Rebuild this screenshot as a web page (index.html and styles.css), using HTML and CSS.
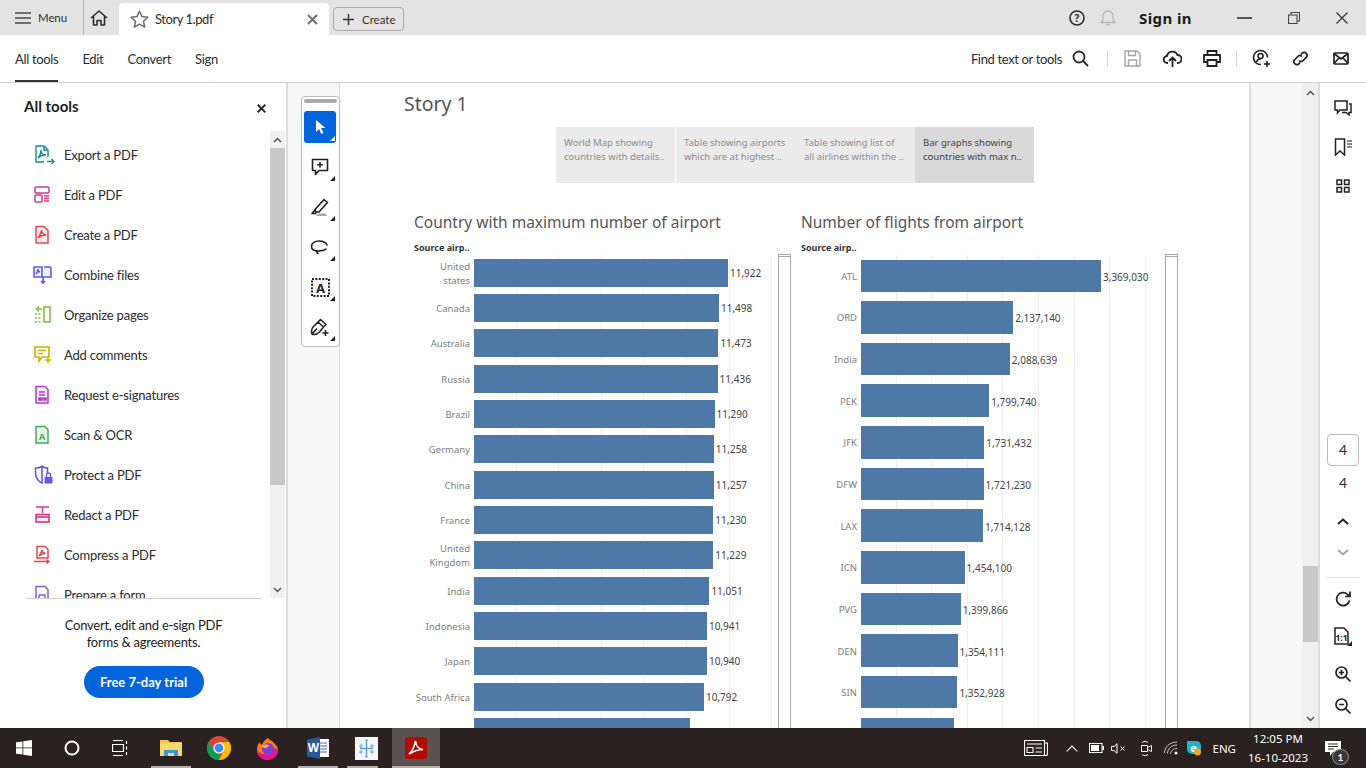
FILE: index.html
```html
<!DOCTYPE html>
<html lang="en">
<head>
    <meta charset="UTF-8">
    <meta name="viewport" content="width=device-width, initial-scale=1.0">
    <title>Story 1.pdf</title>
    <link rel="stylesheet" href="styles.css">
</head>
<body>
    <!-- title bar -->
    <header class="titlebar">
        <div class="menu-btn">
            <svg width="16" height="12" viewBox="0 0 16 12"><path d="M0 1h16M0 6h16M0 11h16" stroke="#4b4b4b" stroke-width="1.6"/></svg>
            <span>Menu</span>
        </div>
        <div class="home-btn">
            <svg width="18" height="18" viewBox="0 0 18 18" fill="none" stroke="#2c2c2c" stroke-width="1.6" stroke-linejoin="round"><path d="M1 9 9 2l8 7M3.5 7.5V16H7v-4.5h4V16h3.5V7.5"/></svg>
        </div>
        <div class="tab">
            <svg width="19" height="18" viewBox="0 0 19 18" fill="none" stroke="#6b6b6b" stroke-width="1.5" stroke-linejoin="round"><path d="M9.5 1.2l2.5 5.4 5.9.7-4.4 4 1.2 5.8-5.2-2.9-5.2 2.9 1.2-5.8-4.4-4 5.9-.7z"/></svg>
            <span class="tab-name">Story 1.pdf</span>
            <svg width="11" height="11" viewBox="0 0 11 11"><path d="M1 1l9 9M10 1l-9 9" stroke="#6e6e6e" stroke-width="2"/></svg>
        </div>
        <div class="create-btn">
            <svg width="11" height="11" viewBox="0 0 11 11"><path d="M5.5 0v11M0 5.5h11" stroke="#333" stroke-width="1.4"/></svg>
            <span>Create</span>
        </div>
        <div class="title-right">
            <svg class="help-icon" width="16" height="16" viewBox="0 0 16 16"><circle cx="8" cy="8" r="7" fill="none" stroke="#2c2c2c" stroke-width="1.6"/><text x="8" y="11.5" text-anchor="middle" class="svg-help">?</text></svg>
            <svg class="bell-icon" width="16" height="17" viewBox="0 0 16 17" fill="none" stroke="#b9b9b9" stroke-width="1.4"><path d="M1 13.5c1.5-1 2-2 2-4.5V7a5 5 0 0 1 10 0v2c0 2.500.5 3.500 2 4.500zM6 15.500h4"/></svg>
            <span class="sign-in">Sign in</span>
            <svg class="win-min" width="15" height="2" viewBox="0 0 15 2"><path d="M0 1h15" stroke="#222" stroke-width="1.5"/></svg>
            <svg class="win-max" width="12" height="12" viewBox="0 0 12 12" fill="none" stroke="#444" stroke-width="1.1"><path d="M.5 3H9v8.500H.5zM3 3V.5h8.500V9H9"/></svg>
            <svg class="win-close" width="12" height="12" viewBox="0 0 12 12"><path d="M.5.5l11 11M11.500.5l-11 11" stroke="#333" stroke-width="1.2"/></svg>
        </div>
    </header>

    <!-- tool bar -->
    <nav class="toolbar">
        <a class="nav-link active">All tools</a>
        <a class="nav-link">Edit</a>
        <a class="nav-link">Convert</a>
        <a class="nav-link">Sign</a>
        <div class="toolbar-right">
            <span class="find-text">Find text or tools</span>
            <svg class="tb-search" width="17" height="17" viewBox="0 0 17 17" fill="none" stroke="#2c2c2c" stroke-width="1.8"><circle cx="7" cy="7" r="5.5"/><path d="M11 11l5 5"/></svg>
            <i class="tb-sep sep-a"></i>
            <svg class="tb-save" width="17" height="17" viewBox="0 0 17 17" fill="none" stroke="#a5a5a5" stroke-width="1.4"><path d="M1 1h12l3 3v12H1zM4.500 1v4.500h7V1M4.500 16v-6h8v6"/></svg>
            <svg class="tb-upload" width="19" height="18" viewBox="0 0 19 18" fill="none" stroke="#222" stroke-width="1.8"><path d="M5 13h-.5a3.500 3.500 0 0 1-.5-7 5.500 5.500 0 0 1 10.500-1 4 4 0 0 1 0 8H14M9.500 17V8M6 11l3.500-3.500L13 11"/></svg>
            <svg class="tb-print" width="18" height="17" viewBox="0 0 18 17" fill="none" stroke="#222" stroke-width="1.8"><path d="M4.500 5V1h9v4M4 12H1V5h16v7h-3M4.500 10h9v6h-9z"/></svg>
            <i class="tb-sep sep-b"></i>
            <svg class="tb-share" width="19" height="19" viewBox="0 0 19 19" fill="none" stroke="#222" stroke-width="1.6"><path d="M9 15.500a7 7 0 1 1 6.500-7"/><circle cx="8.500" cy="7" r="2.500"/><path d="M4.500 13c.5-2 2-3 4-3M15 12v6M12 15h6"/></svg>
            <svg class="tb-link" width="17" height="17" viewBox="0 0 17 17" fill="none" stroke="#222" stroke-width="1.7"><path d="M7 10.500a3 3 0 0 0 4.200 0l3.300-3.300a3 3 0 0 0-4.200-4.200L9 4.300M10 6.500a3 3 0 0 0-4.200 0l-3.300 3.300a3 3 0 0 0 4.200 4.200L8 12.700"/></svg>
            <svg class="tb-mail" width="16" height="13" viewBox="0 0 16 13" fill="none" stroke="#222" stroke-width="1.7"><rect x="1" y="1" width="14" height="11" rx="1"/><path d="M1 1.500 8 7l7-5.500M1 11.500 6 6M15 11.500 10 6"/></svg>
        </div>
    </nav>

    <div class="workspace">
        <!-- all tools panel -->
        <aside class="tools-panel">
            <div class="panel-head">
                <h2>All tools</h2>
                <svg width="9" height="9" viewBox="0 0 9 9"><path d="M.7.7l7.600 7.600M8.300.7.700 8.300" stroke="#222" stroke-width="1.9"/></svg>
            </div>
            <div class="panel-scroll">
                <ul class="tool-list">
                    <li>
                        <svg width="22" height="20" viewBox="0 0 22 20" fill="none" stroke="#1b8a98" stroke-width="1.4"><path d="M11 17H3V1h8l4 4v7M11 1v4h4M5 13c2-2 3-5 3-8 0 3 2 5 5 5-3 0-6 1-8 3zM14 16.500h7M18.500 14l2.500 2.500-2.500 2.500"/></svg>
                        <span>Export a PDF</span>
                    </li>
                    <li>
                        <svg width="22" height="20" viewBox="0 0 22 20" fill="none" stroke="#cf3a97" stroke-width="1.5"><rect x="2" y="2" width="14" height="6" rx="1"/><rect x="2" y="10" width="7" height="7" rx="1"/><path d="M11 11h5M11 13.500h5M11 16h5"/></svg>
                        <span>Edit a PDF</span>
                    </li>
                    <li>
                        <svg width="22" height="20" viewBox="0 0 22 20" fill="none" stroke="#e34850" stroke-width="1.5"><path d="M3 1.500h8l4 4V18H3z" fill="#fdecec"/><path d="M5 13c2-2 3-5 3.500-8 0 3 2 4.500 4.500 5-3 0-6 1-8 3z"/></svg>
                        <span>Create a PDF</span>
                    </li>
                    <li>
                        <svg width="22" height="20" viewBox="0 0 22 20" fill="none" stroke="#5c5ce0" stroke-width="1.6"><path d="M1 2h8v10H1zM11 2h6l1 1v9h-7M9 12h2M10 12v6M8 16l2 2 2-2M3 9c1-1 2-3 2-5 0 2 1 3 2 3" fill="#eeeefd"/></svg>
                        <span>Combine files</span>
                    </li>
                    <li>
                        <svg width="22" height="20" viewBox="0 0 22 20" fill="none" stroke="#7cc34a" stroke-width="1.6"><rect x="11" y="2" width="6" height="15"/><path d="M2 9h7M2 13h7M2 17h7" stroke-dasharray="2 1.5"/><path d="M9 4H4M6 1.500 3.500 4 6 6.500"/></svg>
                        <span>Organize pages</span>
                    </li>
                    <li>
                        <svg width="22" height="20" viewBox="0 0 22 20" fill="none" stroke="#d6b300" stroke-width="1.7"><path d="M2 2h14v10H9l-3 4v-4H2zM5 5.500h8M5 8.500h5M15 12v6M12 15h6"/></svg>
                        <span>Add comments</span>
                    </li>
                    <li>
                        <svg width="22" height="20" viewBox="0 0 22 20" fill="none" stroke="#b03ec0" stroke-width="1.5"><path d="M3 1.500h9l3 3V18H3zM6 7h6M6 10h6" fill="#f8ecfa"/><path d="M6 13h3v2H6zM11 13h2v2h-2z" fill="#b03ec0"/></svg>
                        <span>Request e-signatures</span>
                    </li>
                    <li>
                        <svg width="22" height="20" viewBox="0 0 22 20" fill="none" stroke="#3fae5a" stroke-width="1.5"><path d="M3 1.500h9l3 3V18H3z" fill="#e9f7ec"/><text x="9" y="14.500" text-anchor="middle" class="svg-scan">A</text></svg>
                        <span>Scan &amp; OCR</span>
                    </li>
                    <li>
                        <svg width="22" height="20" viewBox="0 0 22 20" fill="none" stroke="#5c5ce0" stroke-width="1.6"><path d="M9 1.500c2 1.200 4 1.500 5.500 1.500v5M9 18C5 16 2.500 13 2.500 8V3C4.500 3 7 2.700 9 1.500V18z"/><rect x="11.500" y="12" width="8" height="6.500" fill="#5c5ce0" stroke="none"/><path d="M13.500 12v-2a2 2 0 0 1 4 0v2" stroke-width="1.3"/></svg>
                        <span>Protect a PDF</span>
                    </li>
                    <li>
                        <svg width="22" height="20" viewBox="0 0 22 20" fill="none" stroke="#d83790" stroke-width="1.6"><path d="M3 2h13M9.500 2v6"/><rect x="3" y="9.500" width="13" height="7.500" fill="#fdeaf4"/><path d="M3 12h13"/></svg>
                        <span>Redact a PDF</span>
                    </li>
                    <li>
                        <svg width="22" height="20" viewBox="0 0 22 20" fill="none" stroke="#e34850" stroke-width="1.5"><path d="M4 1.500h8l3 3V13H4zM6 11c1.500-1.500 2.500-3.500 3-6 0 2 1.500 3 3.500 3.500-2.500 0-4.500 1-6.500 2.500zM1 16.500h15M13.500 14.500l2.500 2-2.500 2"/></svg>
                        <span>Compress a PDF</span>
                    </li>
                    <li>
                        <svg width="22" height="20" viewBox="0 0 22 20" fill="none" stroke="#9256d9" stroke-width="1.5"><path d="M3 1.500h9l3 3V18H3zM6 10h6v8M6 10v8"/></svg>
                        <span>Prepare a form</span>
                    </li>
                </ul>
                <div class="panel-scrollbar">
                    <svg width="9" height="6" viewBox="0 0 9 6"><path d="M1 5l3.500-3.500L8 5" fill="none" stroke="#555" stroke-width="1.5"/></svg>
                    <div class="panel-thumb"></div>
                    <svg class="arrow-down" width="9" height="6" viewBox="0 0 9 6"><path d="M1 1l3.500 3.500L8 1" fill="none" stroke="#555" stroke-width="1.5"/></svg>
                </div>
            </div>
            <div class="panel-foot">
                <p>Convert, edit and e-sign PDF<br>forms &amp; agreements.</p>
                <button class="trial-btn">Free 7-day trial</button>
            </div>
        </aside>

        <!-- quick tools -->
        <div class="quick-column">
            <div class="quick-tools">
                <div class="quick-grip"></div>
                <div class="quick-btn selected">
                    <svg width="13" height="16" viewBox="0 0 13 16"><path d="M2 1v12l3-3 2.500 5 2-1L7 9h4.500z" fill="#fff"/></svg>
                </div>
                <div class="quick-btn">
                    <svg width="18" height="18" viewBox="0 0 18 18" fill="none" stroke="#222" stroke-width="1.6" stroke-linejoin="round"><path d="M1.500 1.500h15v11H8l-3.500 4v-4h-3zM9 4v5.500M6.200 6.700h5.600"/></svg>
                </div>
                <div class="quick-btn">
                    <svg width="20" height="19" viewBox="0 0 20 19" fill="none" stroke="#222" stroke-width="1.6" stroke-linejoin="round"><path d="M5.500 11 14 1.500l3.500 3L9 14H5.500zM5.500 11 2 15.500h4.500"/><path d="M8 15.500h7.500l1.500 2.500H6z" fill="#aaa" stroke="none"/></svg>
                </div>
                <div class="quick-btn">
                    <svg width="20" height="14" viewBox="0 0 20 14" fill="none" stroke="#222" stroke-width="1.6" stroke-linecap="round"><path d="M17 5C16 2.500 13 1 9 1 5 1 1.500 3 1.500 6.500S5 11 8.500 11c3 0 6-.7 7.500-2"/><path d="M7 11c-.5 1 0 2 1 2.500"/></svg>
                </div>
                <div class="quick-btn">
                    <svg width="19" height="19" viewBox="0 0 19 19"><rect x="1" y="1" width="17" height="17" fill="none" stroke="#222" stroke-width="2" stroke-dasharray="2 1.4"/><text x="9.500" y="14.500" text-anchor="middle" class="svg-select">A</text></svg>
                </div>
                <div class="quick-btn">
                    <svg width="20" height="19" viewBox="0 0 20 19" fill="none" stroke="#222" stroke-width="1.6" stroke-linejoin="round"><path d="M2 16c-1-3-.5-5.500 1.500-7.500L8 4l5.500 5-4 5c-2 2-5 3-7.500 2zM8 4l2.500-2.500 5.500 5-2.500 2.500M2 16l5-5.500"/><path d="M15.500 12v6M12.500 15h6"/></svg>
                </div>
            </div>
        </div>

        <!-- document page -->
        <main class="doc">
            <h1 class="story-title">Story 1</h1>
            <div class="story-nav">
                <div class="story-point">World Map showing<br>countries with details..</div>
                <div class="story-point no-sep">Table showing airports<br>which are at highest ..</div>
                <div class="story-point">Table showing list of<br>all airlines within the ..</div>
                <div class="story-point current">Bar graphs showing<br>countries with max n..</div>
            </div>
            <div class="charts">
                <section class="chart">
                    <h2 class="chart-title">Country with maximum number of airport</h2>
                    <div class="axis-name">Source airp..</div>
                    <div class="chart-body">
                        <div class="rows rows-country">
                            <div class="row"><span class="row-label">United<br>states</span><div class="bar" style="width:254px"></div><span class="val">11,922</span></div>
                            <div class="row"><span class="row-label">Canada</span><div class="bar" style="width:245px"></div><span class="val">11,498</span></div>
                            <div class="row"><span class="row-label">Australia</span><div class="bar" style="width:244.4px"></div><span class="val">11,473</span></div>
                            <div class="row"><span class="row-label">Russia</span><div class="bar" style="width:243.6px"></div><span class="val">11,436</span></div>
                            <div class="row"><span class="row-label">Brazil</span><div class="bar" style="width:240.5px"></div><span class="val">11,290</span></div>
                            <div class="row"><span class="row-label">Germany</span><div class="bar" style="width:239.8px"></div><span class="val">11,258</span></div>
                            <div class="row"><span class="row-label">China</span><div class="bar" style="width:239.8px"></div><span class="val">11,257</span></div>
                            <div class="row"><span class="row-label">France</span><div class="bar" style="width:239.3px"></div><span class="val">11,230</span></div>
                            <div class="row"><span class="row-label">United<br>Kingdom</span><div class="bar" style="width:239.2px"></div><span class="val">11,229</span></div>
                            <div class="row"><span class="row-label">India</span><div class="bar" style="width:235.4px"></div><span class="val">11,051</span></div>
                            <div class="row"><span class="row-label">Indonesia</span><div class="bar" style="width:233px"></div><span class="val">10,941</span></div>
                            <div class="row"><span class="row-label">Japan</span><div class="bar" style="width:233px"></div><span class="val">10,940</span></div>
                            <div class="row"><span class="row-label">South Africa</span><div class="bar" style="width:230px"></div><span class="val">10,792</span></div>
                            <div class="row"><span class="row-label"></span><div class="bar" style="width:216px"></div></div>
                        </div>
                        <div class="chart-scroll"></div>
                    </div>
                </section>
                <section class="chart">
                    <h2 class="chart-title">Number of flights from airport</h2>
                    <div class="axis-name">Source airp..</div>
                    <div class="chart-body">
                        <div class="rows rows-flights">
                            <div class="row"><span class="row-label">ATL</span><div class="bar" style="width:240px"></div><span class="val">3,369,030</span></div>
                            <div class="row"><span class="row-label">ORD</span><div class="bar" style="width:152.2px"></div><span class="val">2,137,140</span></div>
                            <div class="row"><span class="row-label">India</span><div class="bar" style="width:148.8px"></div><span class="val">2,088,639</span></div>
                            <div class="row"><span class="row-label">PEK</span><div class="bar" style="width:128.2px"></div><span class="val">1,799,740</span></div>
                            <div class="row"><span class="row-label">JFK</span><div class="bar" style="width:123.3px"></div><span class="val">1,731,432</span></div>
                            <div class="row"><span class="row-label">DFW</span><div class="bar" style="width:122.6px"></div><span class="val">1,721,230</span></div>
                            <div class="row"><span class="row-label">LAX</span><div class="bar" style="width:122.1px"></div><span class="val">1,714,128</span></div>
                            <div class="row"><span class="row-label">ICN</span><div class="bar" style="width:103.6px"></div><span class="val">1,454,100</span></div>
                            <div class="row"><span class="row-label">PVG</span><div class="bar" style="width:99.7px"></div><span class="val">1,399,866</span></div>
                            <div class="row"><span class="row-label">DEN</span><div class="bar" style="width:96.5px"></div><span class="val">1,354,111</span></div>
                            <div class="row"><span class="row-label">SIN</span><div class="bar" style="width:96.4px"></div><span class="val">1,352,928</span></div>
                            <div class="row"><span class="row-label"></span><div class="bar" style="width:93px"></div></div>
                        </div>
                        <div class="chart-scroll"></div>
                    </div>
                </section>
            </div>
        </main>

        <div class="doc-margin"></div>

        <div class="doc-scrollbar">
            <svg width="9" height="6" viewBox="0 0 9 6"><path d="M1 5l3.500-3.500L8 5" fill="none" stroke="#555" stroke-width="1.5"/></svg>
            <div class="doc-thumb"></div>
            <svg width="9" height="6" viewBox="0 0 9 6"><path d="M1 1l3.500 3.500L8 1" fill="none" stroke="#555" stroke-width="1.5"/></svg>
        </div>

        <!-- right rail -->
        <aside class="rail">
            <svg class="rail-comment" width="18" height="17" viewBox="0 0 18 17" fill="none" stroke="#222" stroke-width="1.5"><path d="M1 1h12v9H6l-2.500 3v-3H1zM15 4h2v8.500h-2V15l-3-2.500H8"/></svg>
            <svg class="rail-bookmark" width="18" height="18" viewBox="0 0 18 18" fill="none" stroke="#222" stroke-width="1.5"><path d="M1.500 1h9v16L6 13l-4.500 4z"/><path d="M13 3h5M13 6h5M13 9h5" stroke="#666"/></svg>
            <svg class="rail-grid" width="14" height="14" viewBox="0 0 14 14" fill="none" stroke="#222" stroke-width="1.5"><rect x="1" y="1" width="4.500" height="4.500"/><rect x="8.500" y="1" width="4.500" height="4.500"/><rect x="1" y="8.500" width="4.500" height="4.500"/><rect x="8.500" y="8.500" width="4.500" height="4.500"/></svg>
            <div class="page-box">4</div>
            <div class="page-total">4</div>
            <svg class="rail-up" width="12" height="7" viewBox="0 0 12 7"><path d="M1 6l5-4.500L11 6" fill="none" stroke="#222" stroke-width="2"/></svg>
            <svg class="rail-down" width="12" height="7" viewBox="0 0 12 7"><path d="M1 1l5 4.500L11 1" fill="none" stroke="#a5a5a5" stroke-width="2"/></svg>
            <div class="rail-line"></div>
            <svg class="rail-rotate" width="16" height="16" viewBox="0 0 16 16" fill="none" stroke="#222" stroke-width="1.7"><path d="M14.500 9.500a6.500 6.500 0 1 1-2-6.200l2 1.700M15 .5v5h-5"/></svg>
            <svg class="rail-fit" width="18" height="19" viewBox="0 0 18 19"><path d="M1 1h9l4 4v12H1z" fill="none" stroke="#222" stroke-width="1.5"/><text x="7.500" y="14" text-anchor="middle" class="svg-fit">1:1</text><path d="M18 14v5h-5z" fill="#222"/></svg>
            <svg class="rail-zoom-in" width="16" height="16" viewBox="0 0 16 16" fill="none" stroke="#222" stroke-width="1.7"><circle cx="6.500" cy="6.500" r="5.500"/><path d="M10.500 10.500l5 5M6.500 3.800v5.400M3.800 6.500h5.400"/></svg>
            <svg class="rail-zoom-out" width="16" height="16" viewBox="0 0 16 16" fill="none" stroke="#222" stroke-width="1.7"><circle cx="6.500" cy="6.500" r="5.500"/><path d="M10.500 10.500l5 5M3.800 6.500h5.400"/></svg>
        </aside>
    </div>

    <!-- windows taskbar -->
    <footer class="taskbar">
        <div class="task">
            <svg width="16" height="16" viewBox="0 0 16 16" fill="#fff"><path d="M0 2.300 6.500 1.400v6.100H0zM7.300 1.300 16 0v7.500H7.300zM0 8.300h6.500v6.300L0 13.700zM7.300 8.300H16V16l-8.700-1.300z"/></svg>
        </div>
        <div class="task">
            <svg width="16" height="16" viewBox="0 0 16 16"><circle cx="8" cy="8" r="6.5" fill="none" stroke="#fff" stroke-width="2"/></svg>
        </div>
        <div class="task">
            <svg width="17" height="16" viewBox="0 0 17 16" fill="none" stroke="#fff" stroke-width="1.2"><path d="M1 .5h10M1 15.500h10M.5 4.500h11v7H.5zM14.500 1v3M14.500 6.500v3M14.500 12v3"/></svg>
        </div>
        <div class="task task-gap-a open">
            <svg width="22" height="18" viewBox="0 0 22 18"><path d="M0 1h8l2 2h12v14H0z" fill="#f2c14e"/><path d="M0 4h22v13H0z" fill="#fbd96f"/><path d="M4 17v-6h14v6h-4v-3H8v3z" fill="#3a9ad9"/></svg>
        </div>
        <div class="task">
            <svg width="24" height="24" viewBox="0 0 24 24"><circle cx="12" cy="12" r="12" fill="#db4437"/><path d="M12 12 1.600 18A12 12 0 0 0 12 24z" fill="#0f9d58"/><path d="M12 12 22.400 18A12 12 0 0 1 12 24L18 12z" fill="#fbbc05"/><path d="M22.400 18a12 12 0 0 0 0-12H12l6 12z" fill="#fbbc05"/><path d="M1.600 18a12 12 0 0 1 0-12L7 14l5 10z" fill="#0f9d58"/><circle cx="12" cy="12" r="5.6" fill="#fff"/><circle cx="12" cy="12" r="4.4" fill="#4285f4"/></svg>
        </div>
        <div class="task">
            <svg width="23" height="23" viewBox="0 0 23 23"><path d="M12 1c1 2 4 2.500 6 5 2 2 4 4 4 7a10.500 10 0 0 1-21 0C1 9 2 7 4 5c0 2 1 2.500 2 3 1-3 3-5.500 6-7z" fill="#ff7a18"/><path d="M22 13a10.500 10 0 0 1-21 0c3 5 12 7 18-2z" fill="#e31587"/><circle cx="12" cy="12" r="6" fill="#7f3bd6"/><path d="M5 9c3-2 7-2 9 0-2 0-3 1-3 2-2 0-4 0-6-2z" fill="#ffa436"/></svg>
        </div>
        <div class="task task-gap-a open">
            <svg width="22" height="22" viewBox="0 0 22 22"><path d="M7 2h15v18H7z" fill="#fff"/><path d="M13 6h7M13 9h7M13 12h7M13 15h7" stroke="#3f6fb5" stroke-width="1.2"/><path d="M0 2.500 13 0v22L0 19.500z" fill="#2b5797"/><text x="6.500" y="15" text-anchor="middle" class="svg-word">W</text></svg>
        </div>
        <div class="task open-split">
            <svg width="23" height="23" viewBox="0 0 23 23"><rect width="23" height="23" fill="#f3f5f6"/><path d="M11.500 5v13M5 11.500h13" stroke="#5b9bd1" stroke-width="1.5"/><path d="M6 7v4M4 9h4M17 7v4M15 9h4M6 13v4M4 15h4M17 13v4M15 15h4M11.500 2v3M10 3.500h3M11.500 18v3M10 19.500h3" stroke="#6fa8d6"/></svg>
        </div>
        <div class="task task-active">
            <svg width="22" height="22" viewBox="0 0 22 22"><rect width="22" height="22" rx="3" fill="#b30b00"/><path d="M4 17c3-2.500 5-6.500 6-11 0-2 1-2 1 0 0 3 3 6 7 6.500-4 0-9 1.500-14 4.500z" fill="none" stroke="#fff" stroke-width="1.5"/></svg>
        </div>
        <div class="tray">
            <svg class="tray-news" width="24" height="16" viewBox="0 0 24 16" fill="none" stroke="#fff" stroke-width="1.1"><path d="M.5.500h20v15H.5zM20.500 3h3v11a1.500 1.500 0 0 1-3 0M3 4h15M3 7.500h6v5H3zM11.500 8H18M11.500 12H18"/></svg>
            <svg class="tray-chev" width="12" height="7" viewBox="0 0 12 7"><path d="M.7 6.300 6 1l5.300 5.300" fill="none" stroke="#fff" stroke-width="1.1"/></svg>
            <svg class="tray-battery" width="15" height="10" viewBox="0 0 15 10"><rect x=".5" y=".5" width="12.500" height="9" fill="none" stroke="#fff"/><rect x="2" y="2" width="8" height="6" fill="#fff"/><rect x="13.500" y="3" width="1.500" height="4" fill="#fff"/></svg>
            <svg class="tray-volume" width="15" height="11" viewBox="0 0 15 11" fill="none" stroke="#fff"><path d="M.5 3.500H3L6 .7v9.600L3 7.500H.5zM9.500 3.500l4 4M13.500 3.500l-4 4"/></svg>
            <svg class="tray-meet" width="13" height="17" viewBox="0 0 13 17" fill="none" stroke="#fff"><path d="M2.500 5.500h6v6h-6zM8.500 7.500l4-2v6l-4-2M3 2.500c2-1.500 4-1.500 6 0M3 14.500c2 1.500 4 1.500 6 0"/></svg>
            <svg class="tray-wifi" width="14" height="14" viewBox="0 0 14 14" fill="none" stroke="#c9c9c9"><path d="M.5 12C.5 6 6 1 13 1M3.500 12.500C3.500 8 7.500 4 13 4M6.500 13c0-3 3-5.500 6.500-5.500"/><circle cx="12" cy="12" r="1.5" fill="#fff" stroke="none"/></svg>
            <svg class="tray-eset" width="16" height="16" viewBox="0 0 16 16"><path d="M1 1h9a5 5 0 0 1 5 5v3a5 5 0 0 1-5 5H6a5 5 0 0 1-5-5z" fill="#1fb5c4"/><text x="7.500" y="11.500" text-anchor="middle" class="svg-eset">e</text><circle cx="11.500" cy="12" r="3.500" fill="#f5a623"/></svg>
            <span class="tray-lang">ENG</span>
            <div class="clock"><span>12:05 PM</span><span>16-10-2023</span></div>
            <div class="notify">
                <svg width="16" height="15" viewBox="0 0 16 15"><path d="M0 0h16v11H8l-3 4v-4H0z" fill="#fff"/><path d="M3 3h10M3 5.500h10M3 8h6" stroke="#2a2220"/></svg>
                <span class="notify-badge">1</span>
            </div>
        </div>
    </footer>
</body>
</html>
```

FILE: styles.css
```css
* {
    box-sizing: border-box;
}
html, body {
    margin: 0;
    height: 768px;
    overflow: hidden;
}
body {
    font-family: "Lato", "Noto Sans", sans-serif;
    font-size: 13px;
    color: #2c2c2c;
    background: #fff;
    display: flex;
    flex-direction: column;
}
svg {
    display: block;
    flex: none;
}

/* title bar */
.titlebar {
    height: 35px;
    background: #e3e3e3;
    display: flex;
    align-items: flex-end;
    flex: none;
}
.titlebar > div {
    height: 35px;
    display: flex;
    align-items: center;
}
.menu-btn {
    width: 84px;
    padding-left: 15px;
    gap: 7px;
    font-size: 11.5px;
    letter-spacing: -.1px;
    color: #333;
    border-right: 1px solid #b5b5b5;
    background-clip: padding-box;
}
.home-btn {
    width: 35px;
    padding-left: 6px;
}
.titlebar > .tab {
    width: 210px;
    height: 32px;
    background: #fff;
    border-radius: 4px 4px 0 0;
    padding: 0 11px;
    gap: 15px;
    color: #2c2c2c;
    font-size: 13px;
    letter-spacing: -.45px;
}
.tab-name {
    flex: 1;
    margin-left: -9px;
}
.titlebar > .create-btn {
    width: 71px;
    height: 24px;
    margin: 0 0 4px 4px;
    border: 1px solid #aaa;
    border-radius: 4px;
    padding-left: 9px;
    gap: 8px;
    font-size: 11.5px;
    color: #333;
}
.titlebar > .title-right {
    margin-left: auto;
    padding-right: 18px;
}
.help-icon {
    margin-right: 15px;
}
.bell-icon {
    margin-right: 23px;
}
.sign-in {
    font-family: "Noto Sans", sans-serif;
    font-size: 15px;
    font-weight: 700;
    letter-spacing: .4px;
    color: #1c1c1c;
    margin-right: 38px;
    width: 60px;
}
.win-min {
    margin-right: 36px;
}
.win-max {
    margin-right: 36px;
}

/* tool bar */
.toolbar {
    height: 48px;
    flex: none;
    display: flex;
    padding-left: 15px;
    gap: 24px;
    border-bottom: 1px solid #d0d0d0;
}
.nav-link {
    height: 47px;
    line-height: 48px;
    font-size: 13px;
    letter-spacing: -.32px;
    color: #2c2c2c;
}
.nav-link.active {
    border-bottom: 2px solid #333;
}
.toolbar-right {
    margin-left: auto;
    display: flex;
    align-items: center;
    padding-right: 17px;
}
.find-text {
    font-size: 13px;
    letter-spacing: -.35px;
    margin-right: 10px;
}
.tb-search { margin-right: 18px; }
.tb-sep {
    width: 1px;
    height: 16px;
    background: #d5d5d5;
}
.sep-a { margin-right: 16px; }
.tb-save { margin-right: 22px; }
.tb-upload { margin-right: 21px; }
.tb-print { margin-right: 15px; }
.sep-b { margin-right: 15px; }
.tb-share { margin-right: 21px; }
.tb-link { margin-right: 24px; }

/* main area */
.workspace {
    flex: 1;
    min-height: 0;
    display: flex;
}

/* all tools panel */
.tools-panel {
    width: 288px;
    flex: none;
    border-right: 2px solid #dcdcdc;
    display: flex;
    flex-direction: column;
}
.panel-head {
    height: 48px;
    padding: 14px 20px 0 24px;
    display: flex;
    justify-content: space-between;
    flex: none;
}
.panel-head h2 {
    margin: 0;
    font-size: 15px;
    line-height: 18px;
    font-weight: 700;
    color: #1c1c1c;
}
.panel-head svg {
    margin-top: 7px;
}
.panel-scroll {
    height: 467px;
    flex: none;
    display: flex;
    overflow: hidden;
}
.tool-list {
    list-style: none;
    margin: 0;
    padding: 4px 0 0 33px;
    width: 270px;
    overflow: hidden;
}
.tool-list li {
    height: 40px;
    display: flex;
    align-items: center;
    gap: 9px;
    font-size: 13px;
    letter-spacing: -.2px;
    color: #2c2c2c;
}
.panel-scrollbar {
    width: 15px;
    background: #f0f0f0;
    display: flex;
    flex-direction: column;
    align-items: center;
    padding-top: 6px;
}
.panel-thumb {
    width: 15px;
    height: 337px;
    margin-top: 5px;
    background: #c8c8c8;
}
.arrow-down {
    margin-top: auto;
    margin-bottom: 5px;
}
.panel-foot {
    margin: 0 25px 0 26px;
    border-top: 1px solid #d0d0d0;
    text-align: center;
    flex: 1;
}
.panel-foot p {
    margin: 18px 0 0;
    font-size: 13px;
    line-height: 17px;
    letter-spacing: -.25px;
    color: #1c1c1c;
}
.trial-btn {
    display: block;
    margin: 15px auto 0;
    width: 120px;
    height: 32px;
    border: 0;
    border-radius: 16px;
    background: #0265dc;
    color: #fff;
    font-family: inherit;
    font-size: 13px;
    font-weight: 700;
}

/* quick tools */
.quick-column {
    width: 52px;
    flex: none;
    background: #f7f7f7;
    border-right: 1px solid #dcdcdc;
    padding: 13px 0 0 13px;
}
.quick-tools {
    width: 39px;
    height: 251px;
    background: #fff;
    border: 1px solid #bbb;
    border-radius: 4px;
    padding: 2px;
}
.quick-grip {
    height: 4px;
    background: #aaa;
    border-radius: 2px;
    margin-bottom: 8px;
}
.quick-btn {
    width: 32px;
    height: 32px;
    margin-bottom: 8px;
    border-radius: 3px;
    display: flex;
    align-items: center;
    justify-content: center;
    position: relative;
}
.quick-btn::after {
    content: "";
    position: absolute;
    right: 1px;
    bottom: 2px;
    border-left: 5px solid transparent;
    border-bottom: 5px solid #222;
}
.quick-btn.selected {
    background: #0265dc;
}
.quick-btn.selected::after {
    border-bottom-color: #fff;
}

/* document */
.doc {
    width: 909px;
    flex: none;
    background: #fff;
    overflow: hidden;
    padding: 9px 0 0 64px;
}
.story-title {
    margin: 0;
    font-family: "Noto Sans", sans-serif;
    font-size: 19.5px;
    font-weight: 400;
    line-height: 24px;
    color: #555;
}
.story-nav {
    display: flex;
    width: 478px;
    height: 56px;
    margin: 11px 0 0 152px;
}
.story-point {
    width: 120px;
    padding: 9px 0 0 8px;
    background: #ebebeb;
    font-family: "Noto Sans", sans-serif;
    font-size: 9.5px;
    line-height: 14px;
    color: #8c8c8c;
    border-right: 1px solid #fff;
    white-space: nowrap;
    overflow: hidden;
}
.story-point.no-sep {
    border-right: 0;
}
.story-point.current {
    background: #d9d9d9;
    color: #444;
    border-right: 0;
    width: 119px;
    margin-left: -1px;
}
.charts {
    display: flex;
    gap: 10px;
    margin: 27px 0 0 10px;
}
.chart {
    width: 377px;
}
.chart-title {
    margin: 0;
    font-family: "Noto Sans", sans-serif;
    font-size: 15.5px;
    font-weight: 400;
    line-height: 24px;
    color: #555;
    white-space: nowrap;
}
.axis-name {
    margin-top: 7px;
    height: 14px;
    font-family: "Noto Sans", sans-serif;
    font-size: 9px;
    line-height: 14px;
    font-weight: 700;
    color: #333;
}
.chart-body {
    display: flex;
    height: 600px;
}
.rows {
    width: 364px;
    background-position: 60px 0;
}
.rows-country {
    background-image: repeating-linear-gradient(to right, transparent 0 41.6px, #efefef 41.6px 42.6px);
}
.rows-flights {
    background-image: repeating-linear-gradient(to right, transparent 0 34.6px, #efefef 34.6px 35.6px);
}
.row {
    display: flex;
    align-items: center;
    font-family: "Noto Sans", sans-serif;
}
.rows-country .row {
    height: 35.33px;
}
.rows-country .bar {
    height: 28px;
}
.rows-flights .row {
    height: 41.65px;
}
.rows-flights .bar {
    height: 32.5px;
}
.rows-flights .val {
    margin-top: 2px;
}
.row-label {
    width: 60px;
    height: 100%;
    flex: none;
    padding: 2px 4px 0 0;
    background: #fff;
    display: flex;
    align-items: center;
    justify-content: flex-end;
    text-align: right;
    font-size: 9.5px;
    line-height: 14px;
    color: #808080;
}
.bar {
    background: #4e79a7;
    flex: none;
}
.val {
    margin-left: 2px;
    font-size: 10px;
    color: #444;
}
.chart-scroll {
    width: 13px;
    margin-top: -1px;
    border: 1px solid #aaa;
    border-top: 3px double #aaa;
    border-bottom: 0;
}

/* side gutter and scrollbar */
.doc-margin {
    width: 53px;
    flex: none;
    background: #f7f7f7;
    border-left: 2px solid #dcdcdc;
}
.doc-scrollbar {
    width: 16px;
    flex: none;
    background: #f0f0f0;
    display: flex;
    flex-direction: column;
    align-items: center;
    padding: 7px 0 6px;
}
.doc-thumb {
    width: 15px;
    height: 76px;
    margin-top: 470px;
    margin-bottom: auto;
    background: #c8c8c8;
}

/* right rail */
.rail {
    flex: 1;
    border-left: 2px solid #dcdcdc;
    display: flex;
    flex-direction: column;
    align-items: center;
    color: #2c2c2c;
}
.rail-comment { margin-top: 17px; }
.rail-bookmark { margin-top: 21px; }
.rail-grid { margin-top: 23px; }
.page-box {
    width: 32px;
    height: 32px;
    margin-top: 241px;
    border: 1px solid #bbb;
    border-radius: 4px;
    text-align: center;
    line-height: 30px;
    font-size: 14px;
}
.page-total {
    margin-top: 8px;
    line-height: 17px;
    font-size: 14px;
}
.rail-up { margin-top: 27px; }
.rail-down { margin-top: 24px; }
.rail-line {
    width: 33px;
    height: 1px;
    margin-top: 21px;
    background: #dcdcdc;
}
.rail-rotate { margin-top: 13px; }
.rail-fit { margin-top: 20px; }
.rail-zoom-in { margin-top: 20px; }
.rail-zoom-out { margin-top: 16px; }

/* text inside icons */
.svg-help {
    font-family: "Noto Sans", sans-serif;
    font-size: 10px;
    font-weight: 700;
    fill: #2c2c2c;
}
.svg-scan {
    font-family: "Noto Sans", sans-serif;
    font-size: 9px;
    font-weight: 700;
    fill: #3fae5a;
    stroke: none;
}
.svg-select {
    font-family: "Noto Sans", sans-serif;
    font-size: 13px;
    font-weight: 700;
    fill: #222;
}
.svg-fit {
    font-family: "Noto Sans", sans-serif;
    font-size: 8.5px;
    font-weight: 700;
    fill: #222;
}
.svg-word {
    font-family: "Liberation Sans", sans-serif;
    font-size: 12px;
    font-weight: 700;
    fill: #fff;
}
.svg-eset {
    font-family: "Noto Sans", sans-serif;
    font-size: 11px;
    font-weight: 700;
    fill: #fff;
}

/* taskbar */
.taskbar {
    height: 40px;
    flex: none;
    background: #2a2220;
    display: flex;
    color: #fff;
}
.task {
    width: 48px;
    height: 40px;
    display: flex;
    align-items: center;
    justify-content: center;
    position: relative;
}
.task-gap-a {
    margin-left: 3px;
}
.open::after,
.open-split::after,
.task-active::after {
    content: "";
    position: absolute;
    left: 4px;
    right: 4px;
    bottom: 0;
    height: 2px;
    background: #b5b0ae;
}
.open-split::after {
    left: 5px;
    right: 12px;
}
.task-active {
    margin-left: 2px;
    background: #5a5150;
}
.task-active::after {
    left: 0;
    right: 0;
}
.tray {
    margin-left: auto;
    display: flex;
    align-items: center;
    padding-right: 25px;
}
.tray-news { margin-right: 18px; }
.tray-chev { margin-right: 11px; }
.tray-battery { margin-right: 7px; }
.tray-volume { margin-right: 13px; }
.tray-meet { margin-right: 12px; }
.tray-wifi { margin-right: 8px; }
.tray-eset { margin-right: 10px; }
.tray-lang {
    font-family: "Noto Sans", sans-serif;
    font-size: 11.5px;
    margin-right: 9px;
}
.clock {
    display: flex;
    flex-direction: column;
    align-items: center;
    width: 66px;
    margin-right: 14px;
    font-family: "Noto Sans", sans-serif;
    font-size: 11.5px;
    line-height: 19px;
}
.notify {
    position: relative;
    width: 16px;
}
.notify-badge {
    position: absolute;
    right: -8px;
    bottom: -9px;
    width: 17px;
    height: 16px;
    border-radius: 50%;
    background: #3c3735;
    border: 1px solid #888;
    text-align: center;
    line-height: 14px;
    font-size: 10px;
    font-weight: 700;
}
```
